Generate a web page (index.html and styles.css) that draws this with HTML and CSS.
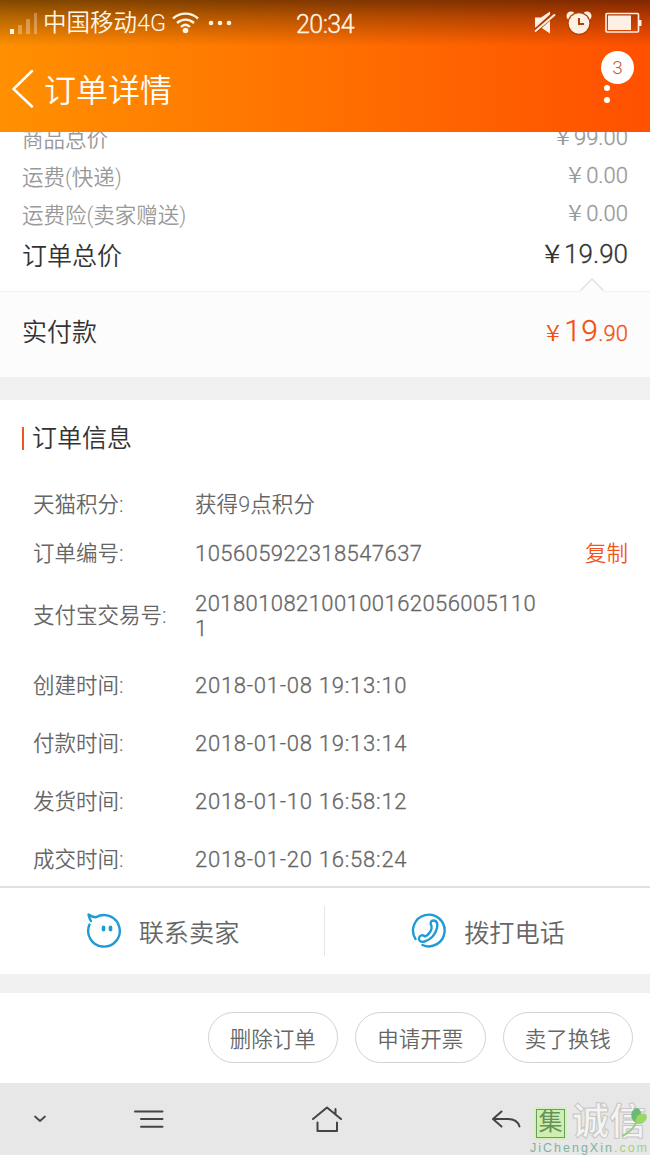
FILE: index.html
```html
<!DOCTYPE html>
<html lang="zh-CN">
<head>
  <meta charset="UTF-8" />
  <meta name="viewport" content="width=device-width, initial-scale=1.0" />
  <title>订单详情</title>
  <link rel="stylesheet" href="styles.css">
</head>
<body>

  <header class="header">
    <div class="status-bar">
      <div class="status-left">
        <svg class="signal" width="28" height="22" viewBox="0 0 28 22">
          <rect x="0" y="17" width="4" height="5" fill="#fff" />
          <rect x="8" y="13" width="4" height="9" fill="#fff" opacity=".3" />
          <rect x="16" y="7" width="4" height="15" fill="#fff" opacity=".3" />
          <rect x="24" y="1" width="3" height="21" fill="#fff" opacity=".3" />
        </svg>
        <span class="carrier">中国移动4G</span>
        <svg class="wifi" width="27" height="22" viewBox="0 0 27 22" fill="none" stroke="#fff3e0" stroke-width="2.4">
          <path d="M1 6.500C8 0 19 0 26 6.500M5 11C10 6.500 17 6.500 22 11M9 15C12 12 15 12 18 15" />
          <circle cx="13.500" cy="18.500" r="2.800" fill="#fff3e0" stroke="none" />
        </svg>
        <svg width="24" height="6" viewBox="0 0 24 6" fill="#fff3e0">
          <circle cx="3" cy="3" r="2.300" /><circle cx="12" cy="3" r="2.300" /><circle cx="21" cy="3" r="2.300" />
        </svg>
      </div>
      <div class="clock">20:34</div>
      <div class="status-right">
        <svg width="22" height="24" viewBox="0 0 22 24">
          <path d="M1 6.500h6l9-6v22l-9-6H1z" fill="#fff0e6" />
          <path d="M1 20L20 3" stroke="#b04000" stroke-width="4.500" />
          <path d="M1 20.500L21 3.500" stroke="#fff0e6" stroke-width="2" />
        </svg>
        <svg class="alarm" width="26" height="24" viewBox="0 0 26 24">
          <circle cx="5" cy="5" r="4.500" fill="#fff0e6" />
          <circle cx="21" cy="5" r="4.500" fill="#fff0e6" />
          <circle cx="13" cy="12.500" r="11.500" fill="#b44100" />
          <circle cx="13" cy="12.500" r="10.300" fill="#fff0e6" />
          <path d="M13 7v6h5" fill="none" stroke="#b44100" stroke-width="2" />
        </svg>
        <svg width="37" height="22" viewBox="0 0 37 22">
          <rect x="1" y="1.500" width="32.500" height="18.500" rx="1" fill="none" stroke="#fff0e6" stroke-width="1.600" />
          <rect x="3" y="3.500" width="23" height="14.500" fill="#fff0e6" />
          <rect x="34" y="8" width="2.500" height="6" fill="#fff0e6" />
        </svg>
      </div>
    </div>
    <div class="title-bar">
      <svg class="back" width="24" height="40" viewBox="0 0 24 40" fill="none" stroke="#fff" stroke-width="2.500" stroke-linecap="round">
        <path d="M20 2L1.500 20L20 37.500" />
      </svg>
      <h1>订单详情</h1>
      <div class="more">
        <i></i><i></i><i></i>
        <span class="badge">3</span>
      </div>
    </div>
  </header>

  <section class="prices">
    <div class="price-row"><span>商品总价</span><b><em>¥</em>99.00</b></div>
    <div class="price-row"><span>运费(快递)</span><b><em>¥</em>0.00</b></div>
    <div class="price-row"><span>运费险(卖家赠送)</span><b><em>¥</em>0.00</b></div>
    <div class="price-row total"><span>订单总价</span><b><em>¥</em>19.90</b></div>
  </section>

  <section class="paid">
    <svg class="notch" width="24" height="14" viewBox="0 0 24 14">
      <path d="M.5 12.500L12 1L23.500 12.500V14H.5z" fill="#fcfcfc" />
      <path d="M.5 12.500L12 1L23.500 12.500" fill="none" stroke="#e2e2e2" stroke-width="1.500" />
    </svg>
    <span>实付款</span>
    <b><em>¥</em><strong>19</strong>.90</b>
  </section>

  <section class="info">
    <h2>订单信息</h2>
    <div class="info-row"><label>天猫积分:</label><span class="cjk">获得9点积分</span></div>
    <div class="info-row"><label>订单编号:</label><span>105605922318547637</span><a class="copy">复制</a></div>
    <div class="info-row trade"><label>支付宝交易号:</label><span>201801082100100162056005110<br>1</span></div>
    <div class="info-row time"><label>创建时间:</label><span>2018-01-08 19:13:10</span></div>
    <div class="info-row time"><label>付款时间:</label><span>2018-01-08 19:13:14</span></div>
    <div class="info-row time"><label>发货时间:</label><span>2018-01-10 16:58:12</span></div>
    <div class="info-row time"><label>成交时间:</label><span>2018-01-20 16:58:24</span></div>
  </section>

  <section class="contact">
    <div class="contact-item">
      <svg width="36" height="36" viewBox="0 0 36 36" fill="none" stroke="#1e9ad6" stroke-width="2.400" stroke-linecap="round" stroke-linejoin="round">
        <path d="M3.500 11.500A15.800 15.800 0 1 0 10 4.200C7.500 4.200 5 3.500 2.500 1.500C3 4 3.500 6 5 8" />
        <path d="M17.500 14.300v2.400M24.500 14.300v2.400" stroke-width="3.600" />
      </svg>
      <span>联系卖家</span>
    </div>
    <div class="contact-item">
      <svg width="36" height="36" viewBox="0 0 36 36" fill="none" stroke="#1e9ad6" stroke-width="2.400" stroke-linecap="round" stroke-linejoin="round">
        <path d="M4.500 26A15.800 15.800 0 1 1 11.500 32" />
        <path d="M20.500 13C18.500 10 20 7.500 22.500 7.500C26 7.500 27 11 26 15C24.500 21 20 26.500 13.500 28.500C10 29.500 7.500 28 8 25C8.500 22 12 21.500 14 23.500C18 21.500 21.500 17 20.500 13z" />
      </svg>
      <span>拨打电话</span>
    </div>
  </section>

  <section class="actions">
    <button>删除订单</button>
    <button>申请开票</button>
    <button>卖了换钱</button>
  </section>

  <footer class="nav">
    <svg class="nav-down" width="14" height="10" viewBox="0 0 14 10"><path d="M2 2.500L7 7L12 2.500" stroke-width="1.700" /></svg>
    <svg class="nav-menu" width="30" height="20" viewBox="0 0 30 20"><path d="M1 2.500H28.500M7 10H28.500M7 17.700H28.500" /></svg>
    <svg class="nav-home" width="30" height="28" viewBox="0 0 30 28"><path d="M1 14L15 2.500L29 14M23.500 8.500V4M5.500 17.500V26H25V17.500" /></svg>
    <svg class="nav-back" width="30" height="20" viewBox="0 0 30 20"><path d="M10.500 2.500L2 10L10.500 17.500M2 10H17C23 10 27 12.500 28.500 17.500" /></svg>

    <div class="watermark">
      <div class="mark-top">
        <span class="mark-box">集</span>
        <span class="mark-name">诚信</span>
        <svg class="leaf" width="28" height="32" viewBox="0 0 28 32">
          <path d="M15 17C8 13 9 3 16 2C21 3 22 11 15 17z" fill="#69ba72" />
          <path d="M14 18C14 10 19 6 25 8C28 13 23 19 14 18z" fill="#9bd668" />
          <path d="M15 17C12 23 8 27 1 30" fill="none" stroke="#9bcf80" stroke-width="2" />
        </svg>
      </div>
      <div class="mark-url">JiChengXin<span>.com</span></div>
    </div>
  </footer>

</body>
</html>
```
FILE: styles.css
```css
* {
  box-sizing: border-box;
}

body {
  margin: 0;
  width: 650px;
  height: 1155px;
  overflow: hidden;
  background: #fff;
  color: #666;
  font-family: Roboto, "Noto Sans CJK SC", sans-serif;
  font-weight: 350;
}

h1, h2 {
  margin: 0;
  font-weight: 350;
}

b, strong, em {
  font-weight: 350;
  font-style: normal;
}

svg {
  display: block;
  flex: none;
}

/* header */
.header {
  position: relative;
  z-index: 1;
  height: 132px;
  background:
    linear-gradient(to bottom, rgba(0, 0, 0, .5) 0, rgba(0, 0, 0, .28) 18px, rgba(0, 0, 0, 0) 46px),
    linear-gradient(to right, #ff9000, #ff5000);
  color: #fff;
}

.status-bar {
  display: flex;
  justify-content: space-between;
  height: 46px;
  padding: 0 8px 0 10px;
  color: #fff6e8;
}

.status-left,
.status-right {
  display: flex;
  align-items: center;
  width: 270px;
  height: 45px;
}

.carrier {
  margin: 0 6px 0 5px;
  font-size: 23.5px;
  line-height: 44px;
  white-space: nowrap;
}

.wifi {
  margin-right: 9px;
}

.clock {
  margin-left: -2px;
  font-size: 25px;
  line-height: 49px;
  letter-spacing: -.5px;
  -webkit-text-stroke: .3px;
}

.status-right {
  justify-content: flex-end;
}

.alarm {
  margin: 0 13px 0 10px;
}

.title-bar {
  display: flex;
  align-items: center;
  height: 86px;
  padding: 0 38px 0 12px;
}

.title-bar h1 {
  flex: 1;
  margin-left: 8px;
  padding-top: 4px;
  font-size: 32px;
  line-height: 86px;
}

.more {
  position: relative;
  display: flex;
  flex-direction: column;
  gap: 6px;
  width: 12px;
  margin-top: -2px;
}

.more i {
  width: 6px;
  height: 6px;
  margin-left: 4px;
  border-radius: 50%;
  background: #fff;
}

.badge {
  position: absolute;
  left: 1px;
  top: -22px;
  width: 33px;
  height: 33px;
  border-radius: 50%;
  background: #fff;
  color: #d2562b;
  font-size: 19px;
  line-height: 34px;
  text-align: center;
}

/* prices */
.prices {
  height: 172px;
  margin-top: -13px;
}

.price-row {
  display: flex;
  justify-content: space-between;
  height: 38px;
  padding: 0 22px;
  color: #999;
  font-size: 21.5px;
  line-height: 41px;
}

.price-row b {
  font-size: 22px;
  line-height: 37px;
  -webkit-text-stroke: .3px;
}

.price-row em,
.paid em {
  display: inline-block;
  margin-right: 5px;
  font-family: "Noto Sans CJK SC", sans-serif;
  line-height: 1;
  transform: scaleX(1.15);
  -webkit-text-stroke: 0;
}

.total {
  height: 45px;
  color: #333;
  font-size: 25px;
  line-height: 48px;
}

.total b {
  font-size: 26px;
  line-height: 42px;
}

.paid {
  position: relative;
  display: flex;
  justify-content: space-between;
  height: 86px;
  padding: 0 22px;
  border-top: 1px solid #f0f0f0;
  background: #fcfcfc;
  color: #333;
  font-size: 25px;
  line-height: 81px;
}

.notch {
  position: absolute;
  right: 46px;
  top: -14px;
}

.paid b {
  color: #f2500f;
  font-size: 22px;
  line-height: 78px;
  -webkit-text-stroke: .3px;
}

.paid strong {
  font-size: 30px;
  letter-spacing: .4px;
}

/* order info */
.info {
  height: 511px;
  padding: 0 22px;
  border-top: 23px solid #f0f0f0;
  border-bottom: 2px solid #e0e0e0;
}

.info h2 {
  display: flex;
  align-items: center;
  height: 79px;
  padding-bottom: 2px;
  color: #333;
  font-size: 25px;
  line-height: 78px;
}

.info h2::before {
  content: "";
  width: 2px;
  height: 23px;
  margin-right: 8px;
  background: #f0561d;
}

.info-row {
  display: flex;
  align-items: center;
  height: 49px;
  padding: 1px 0 0 11px;
  font-size: 22px;
  line-height: 25px;
}

.info-row label {
  width: 162px;
  font-size: 21.5px;
}

.info-row span {
  letter-spacing: .43px;
  -webkit-text-stroke: .3px;
}

.info-row .cjk {
  font-size: 21.5px;
  letter-spacing: .1px;
  -webkit-text-stroke: 0;
}

.copy {
  margin-left: auto;
  color: #f0561d;
  font-size: 21.5px;
}

.trade {
  height: 76px;
  margin-bottom: 2px;
}

.trade label {
  padding-bottom: 1px;
}

.time {
  height: 58px;
  padding-top: 2px;
}

.time span {
  letter-spacing: .75px;
}

/* contact */
.contact {
  display: flex;
  align-items: center;
  height: 105px;
  border-bottom: 19px solid #f0f0f0;
}

.contact-item {
  display: flex;
  align-items: center;
  justify-content: center;
  gap: 17px;
  width: 326px;
  height: 50px;
  padding-left: 1px;
  font-size: 25.2px;
}

.contact-item:first-child {
  border-right: 1px solid #e6e6e6;
}

/* actions */
.actions {
  display: flex;
  justify-content: flex-end;
  gap: 17px;
  height: 90px;
  padding: 19px 17px 0;
}

.actions button {
  width: 130.5px;
  height: 51px;
  padding: 0;
  border: 1px solid #d2d2d2;
  border-radius: 26px;
  background: #fff;
  color: #666;
  font: inherit;
  font-size: 21.5px;
}

/* system nav */
.nav {
  position: relative;
  display: flex;
  align-items: center;
  height: 72px;
  padding-left: 33px;
  background: #e7e7e7;
}

.nav > svg {
  fill: none;
  stroke: #444;
  stroke-width: 2;
  stroke-linecap: round;
  stroke-linejoin: round;
}

.nav-menu {
  margin-left: 87px;
}

.nav-home {
  margin-left: 148px;
}

.nav-back {
  margin-left: 149px;
}

.watermark {
  position: absolute;
  left: 530px;
  top: 21px;
  width: 120px;
  height: 51px;
}

.mark-top {
  display: flex;
  align-items: center;
  height: 38px;
  padding-left: 6px;
}

.mark-box {
  width: 29px;
  height: 29px;
  border: 1.5px solid #6d9c62;
  background: #cfeeb0;
  outline: 2px solid #d6f0bb;
  color: #62935c;
  font-size: 24px;
  font-weight: 400;
  line-height: 25px;
  text-align: center;
}

.mark-name {
  margin-left: 7px;
  color: #f4f4f4;
  font-size: 37px;
  font-weight: 700;
  line-height: 36px;
  white-space: nowrap;
  -webkit-text-stroke: 1px #c6c6c6;
}

.leaf {
  position: absolute;
  left: 91px;
  top: 2px;
}

.mark-url {
  color: #7fb3a0;
  font-family: "Liberation Sans", sans-serif;
  font-size: 12.5px;
  font-weight: 400;
  line-height: 13px;
  letter-spacing: 2px;
  white-space: nowrap;
}

.mark-url span {
  color: #a3d088;
}
```
